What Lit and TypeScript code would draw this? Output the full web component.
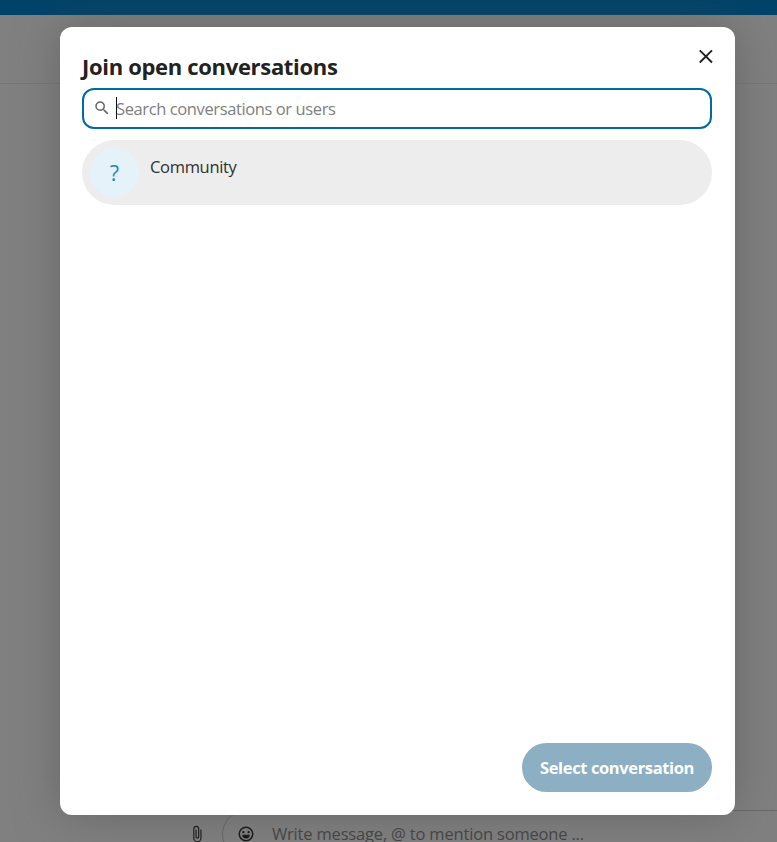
import { LitElement, html, css } from "lit";
import { customElement, property } from "lit/decorators.js";

@customElement("conversation-item")
export class ConversationItem extends LitElement {
  @property() name = "";
  static styles = css`
    :host {
      display: flex;
      box-sizing: border-box;
      height: 65px;
      padding: 8px;
      border-radius: 33px;
      background: #ededed;
    }
    .avatar {
      width: 49px;
      height: 49px;
      border-radius: 50%;
      background: #e5f2fa;
      color: #1389ca;
      font-size: 21.5px;
      line-height: 49px;
      text-align: center;
    }
    .name {
      margin: 7px 0 0 11px;
      font-size: 16.5px;
      line-height: 24px;
      letter-spacing: -0.32px;
      color: #303030;
    }
  `;
  render() {
    return html`<div class="avatar">?</div>
      <div class="name">${this.name}</div>`;
  }
}

@customElement("open-conversations-dialog")
export class OpenConversationsDialog extends LitElement {
  static styles = css`
    :host {
      display: flex;
      flex-direction: column;
      box-sizing: border-box;
      width: 675px;
      height: 788px;
      padding: 23px 23px 23px 22px;
      border-radius: 12px;
      background: #fff;
      box-shadow: 0 0 44px rgba(77, 77, 77, 0.5);
    }
    .head {
      display: flex;
      justify-content: space-between;
      height: 34px;
    }
    h2 {
      margin: -1px 0 0;
      font-size: 22px;
      line-height: 34px;
      font-weight: 700;
      letter-spacing: -0.32px;
      color: #222;
      white-space: nowrap;
    }
    .close {
      margin: -3px -3px 0 0;
      width: 18px;
      height: 18px;
    }
    .search {
      display: flex;
      align-items: center;
      box-sizing: border-box;
      height: 41px;
      margin: 4px 0 11px;
      padding-left: 9px;
      border: 2px solid #006aa3;
      border-radius: 12px;
    }
    .glass {
      width: 18px;
      height: 18px;
      margin-top: -2px;
    }
    .caret {
      width: 1px;
      height: 22px;
      margin: -2px -1px 0 5px;
      background: #111;
    }
    .hint {
      font-size: 16.5px;
      line-height: 24px;
      letter-spacing: -0.39px;
      color: #808080;
      white-space: nowrap;
    }
    .list {
      flex: 1;
    }
    button {
      align-self: flex-end;
      width: 190px;
      height: 49px;
      padding: 0;
      border: 0;
      border-radius: 25px;
      background: #8cafc4;
      color: #fff;
      font-family: inherit;
      font-size: 16.5px;
      font-weight: 700;
      letter-spacing: -0.38px;
      white-space: nowrap;
    }
  `;
  render() {
    return html`
      <div class="head">
        <h2>Join open conversations</h2>
        <svg class="close" viewBox="0 0 18 18" fill="none" stroke="#222" stroke-width="1.9">
          <path d="M2.8 3.3 15 15.500M15 3.3 2.8 15.500" />
        </svg>
      </div>
      <div class="search">
        <svg class="glass" viewBox="0 0 24 24" fill="#666">
          <path
            d="M9.5 3A6.5 6.5 0 0 1 16 9.5c0 1.61-.59 3.09-1.56 4.23l.27.27h.79l5 5-1.5 1.5-5-5v-.79l-.27-.27A6.516 6.516 0 0 1 9.5 16a6.5 6.5 0 0 1 0-13m0 2C7 5 5 7 5 9.5S7 14 9.5 14 14 12 14 9.5 12 5 9.5 5Z"
          />
        </svg>
        <span class="caret"></span>
        <span class="hint">Search conversations or users</span>
      </div>
      <div class="list"><conversation-item name="Community"></conversation-item></div>
      <button>Select conversation</button>
    `;
  }
}

@customElement("app-root")
export class AppRoot extends LitElement {
  static styles = css`
    :host {
      display: block;
      position: relative;
      height: 842px;
      overflow: hidden;
      background: #808080;
      font-family: "Open Sans", "Noto Sans", sans-serif;
    }
    .page {
      display: flex;
      flex-direction: column;
      height: 842px;
    }
    .topbar {
      height: 15px;
      background: #004369;
    }
    .toolbar {
      height: 68px;
      border-bottom: 1px solid #777;
    }
    .messages {
      flex: 1;
    }
    .composer {
      display: flex;
      height: 32px;
      padding-left: 188px;
    }
    .clip {
      flex: none;
      width: 18px;
      height: 18px;
      margin: 15px 16px 0 0;
    }
    .field {
      display: flex;
      flex: none;
      box-sizing: border-box;
      width: 700px;
      height: 49px;
      padding-left: 14px;
      border: 1px solid #686868;
      border-radius: 25px;
    }
    .smile {
      flex: none;
      width: 18px;
      height: 18px;
      margin: 14px 17px 0 0;
    }
    .placeholder {
      height: 20px;
      margin-top: 11px;
      font-size: 16.5px;
      line-height: 24px;
      letter-spacing: -0.18px;
      color: #454545;
      white-space: nowrap;
    }
    .overlay {
      position: absolute;
      inset: 27px 42px auto 60px;
    }
  `;
  render() {
    return html`
      <div class="page">
        <div class="topbar"></div>
        <div class="toolbar"></div>
        <div class="messages"></div>
        <div class="composer">
          <svg class="clip" viewBox="0 0 24 24" fill="#161616">
            <path
              d="M16.5 6v11.5a4 4 0 0 1-4 4 4 4 0 0 1-4-4V5A2.5 2.5 0 0 1 11 2.500 2.500 2.500 0 0 1 13.500 5v10.500a1 1 0 0 1-1 1 1 1 0 0 1-1-1V6H10v9.500a2.500 2.500 0 0 0 2.500 2.500 2.500 2.500 0 0 0 2.500-2.500V5a4 4 0 0 0-4-4 4 4 0 0 0-4 4v12.500a5.500 5.500 0 0 0 5.500 5.500 5.500 5.500 0 0 0 5.500-5.500V6h-1.500Z"
            />
          </svg>
          <div class="field">
            <svg class="smile" viewBox="0 0 24 24" fill="#161616">
              <path
                d="M12 2a10 10 0 1 0 0 20 10 10 0 0 0 0-20m0 18a8 8 0 1 1 0-16 8 8 0 0 1 0 16m-5-7a5 5 0 0 0 10 0H7m1.500-5a1.500 1.500 0 1 0 0 3 1.500 1.500 0 0 0 0-3m7 0a1.500 1.500 0 1 0 0 3 1.500 1.500 0 0 0 0-3Z"
              />
            </svg>
            <span class="placeholder">Write message, @ to mention someone ...</span>
          </div>
        </div>
      </div>
      <div class="overlay"><open-conversations-dialog></open-conversations-dialog></div>
    `;
  }
}
